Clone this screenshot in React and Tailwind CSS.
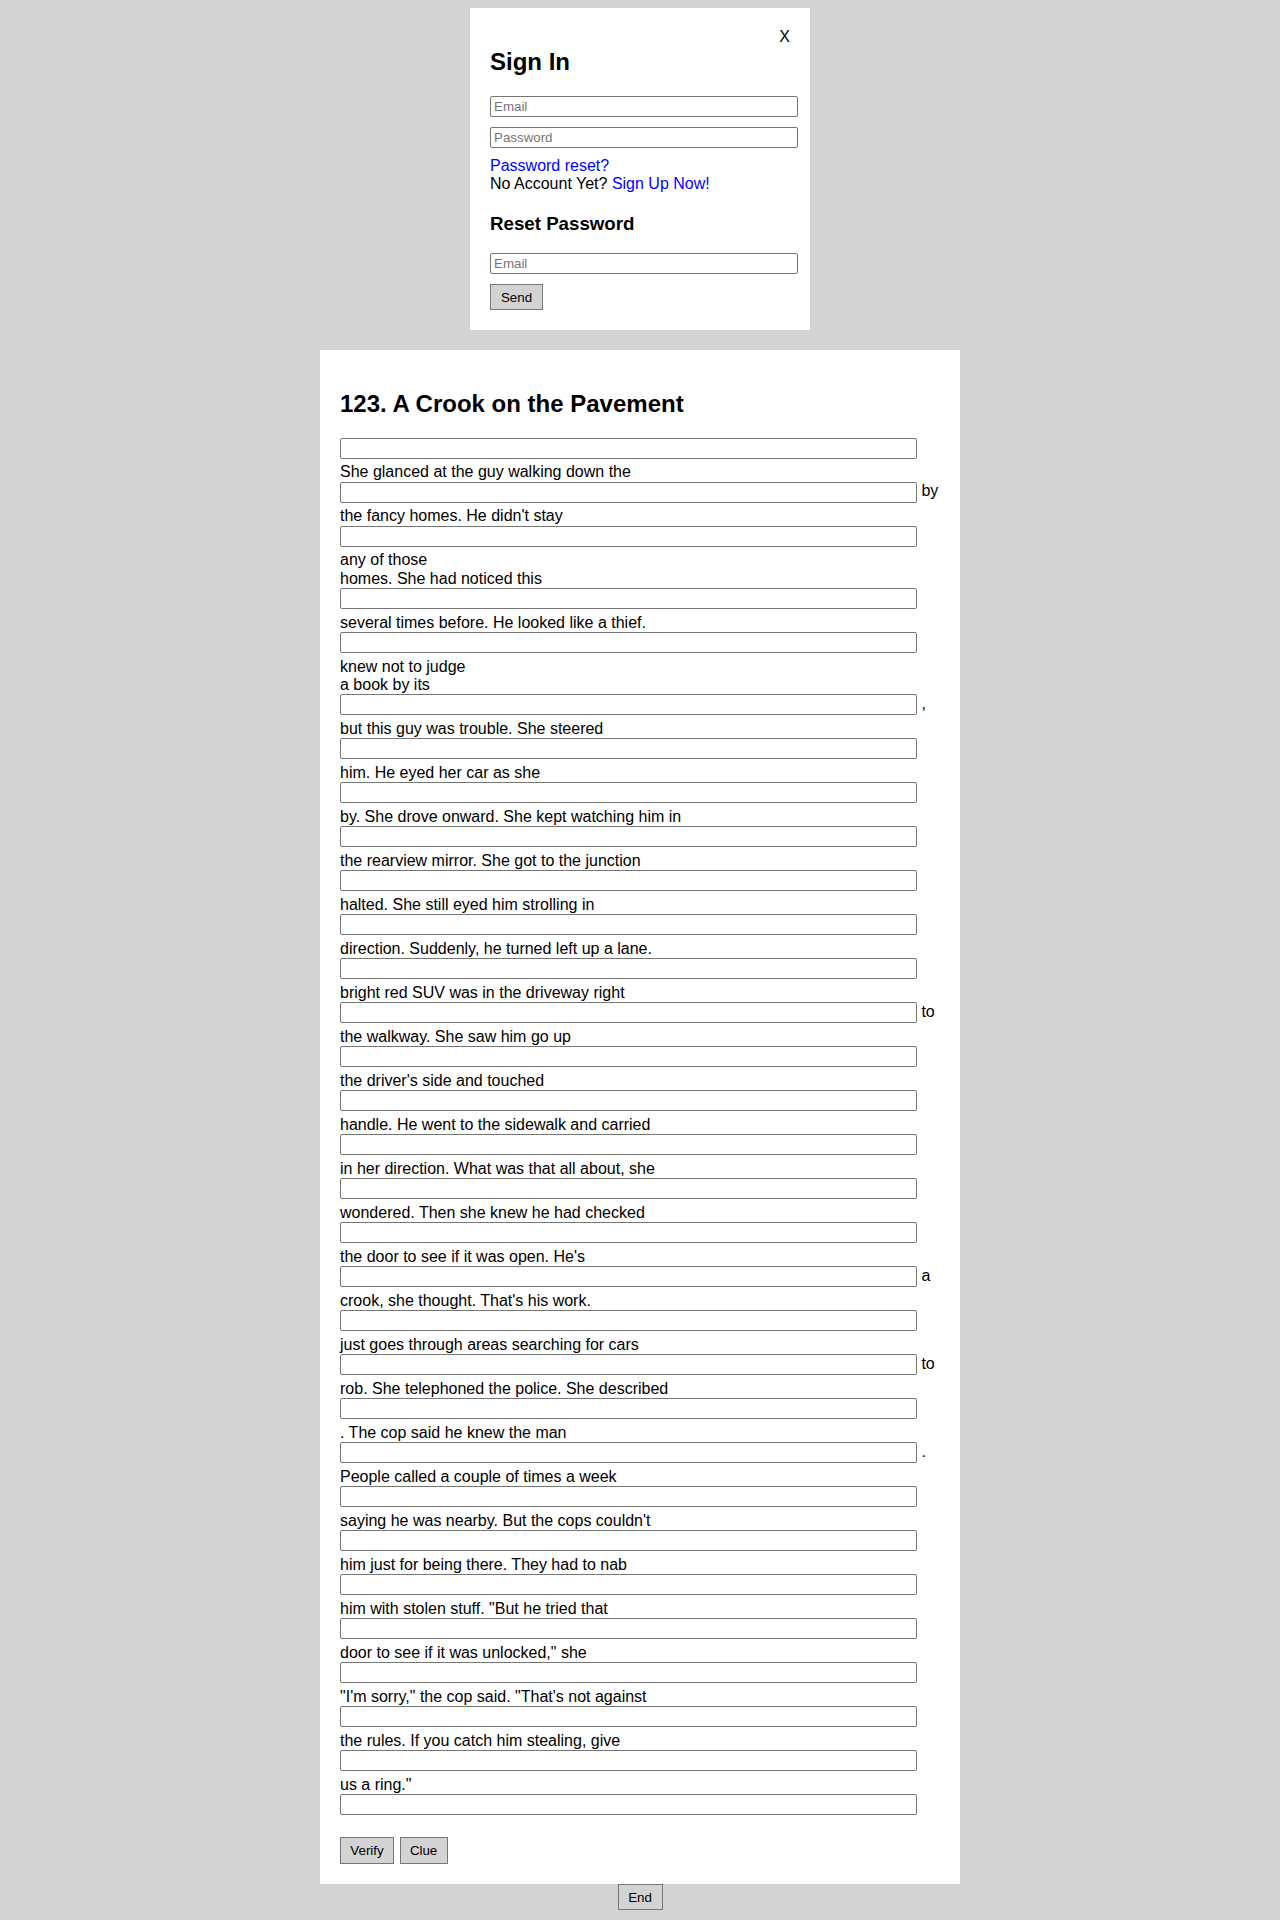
import { useState } from 'react'

// story lines: strings are plain text lines, objects are blanks (with optional trailing text)
const story = [
  { after: '' },
  'She glanced at the guy walking down the',
  { after: 'by' },
  "the fancy homes. He didn't stay",
  { after: '' },
  'any of those',
  'homes. She had noticed this',
  { after: '' },
  'several times before. He looked like a thief.',
  { after: '' },
  'knew not to judge',
  'a book by its',
  { after: ',' },
  'but this guy was trouble. She steered',
  { after: '' },
  'him. He eyed her car as she',
  { after: '' },
  'by. She drove onward. She kept watching him in',
  { after: '' },
  'the rearview mirror. She got to the junction',
  { after: '' },
  'halted. She still eyed him strolling in',
  { after: '' },
  'direction. Suddenly, he turned left up a lane.',
  { after: '' },
  'bright red SUV was in the driveway right',
  { after: 'to' },
  'the walkway. She saw him go up',
  { after: '' },
  "the driver's side and touched",
  { after: '' },
  'handle. He went to the sidewalk and carried',
  { after: '' },
  'in her direction. What was that all about, she',
  { after: '' },
  'wondered. Then she knew he had checked',
  { after: '' },
  "the door to see if it was open. He's",
  { after: 'a' },
  "crook, she thought. That's his work.",
  { after: '' },
  'just goes through areas searching for cars',
  { after: 'to' },
  'rob. She telephoned the police. She described',
  { after: '' },
  '. The cop said he knew the man',
  { after: '.' },
  'People called a couple of times a week',
  { after: '' },
  "saying he was nearby. But the cops couldn't",
  { after: '' },
  'him just for being there. They had to nab',
  { after: '' },
  'him with stolen stuff. "But he tried that',
  { after: '' },
  'door to see if it was unlocked," she',
  { after: '' },
  '"I\'m sorry," the cop said. "That\'s not against',
  { after: '' },
  'the rules. If you catch him stealing, give',
  { after: '' },
  'us a ring."',
  { after: '' }
]

const inputCls =
  'block h-[21px] border border-[#767676] rounded-[2px] bg-white px-[3px] text-[13.33px] leading-[15px] text-black placeholder:text-[#757575] outline-none'

const btnCls =
  'h-[26.5px] border border-[#767676] bg-[#d3d3d3] text-[13.33px] leading-[15px] text-black text-center'

export default function App() {
  const [open, setOpen] = useState(true)
  const [answers, setAnswers] = useState({})

  let blank = 0

  return (
    <div className="min-h-screen bg-[#d3d3d3] pt-[8px] font-['Liberation_Sans',Arial,sans-serif] text-[16px] leading-[18.4px] text-black">
      {open && (
        <div className="mx-auto w-[340px] bg-white p-[20px]">
          <span className="float-right cursor-pointer" onClick={() => setOpen(false)}>
            X
          </span>
          <h2 className="mt-[19.92px] mb-[20.5px] text-[24px] font-bold leading-[27.6px]">Sign In</h2>
          <input type="text" placeholder="Email" className={`${inputCls} w-[308px] mb-[10px]`} />
          <input type="password" placeholder="Password" className={`${inputCls} w-[308px] mb-[9px]`} />
          <a href="#" className="block text-[#0000ff]">Password reset?</a>
          <div>
            No Account Yet? <a href="#" className="text-[#0000ff]">Sign Up Now!</a>
          </div>
          <h3 className="mt-[18.72px] mb-[18.72px] text-[18.72px] font-bold leading-[21.5px]">Reset Password</h3>
          <input type="text" placeholder="Email" className={`${inputCls} w-[308px] mb-[10px]`} />
          <button className={`${btnCls} w-[53px]`}>Send</button>
        </div>
      )}

      <div className="mx-auto mt-[20px] w-[640px] bg-white p-[20px]">
        <h2 className="my-[19.92px] text-[24px] font-bold leading-[27.6px]">123. A Crook on the Pavement</h2>

        <div>
          {story.map((item, idx) => {
            if (typeof item === 'string') {
              return (
                <div key={idx} className="h-[18.4px] whitespace-nowrap">
                  {item}
                </div>
              )
            }
            const n = blank++
            return (
              <div key={idx} className="flex items-start gap-[4.4px] h-[25.6px]">
                <input
                  type="text"
                  value={answers[n] || ''}
                  onChange={(e) => setAnswers({ ...answers, [n]: e.target.value })}
                  className={`${inputCls} w-[577px] shrink-0`}
                />
                {item.after && <span className="mt-[0.7px]">{item.after}</span>}
              </div>
            )
          })}
        </div>

        <div className="mt-[17.9px] flex gap-[5.6px]">
          <button className={`${btnCls} w-[54px]`}>Verify</button>
          <button className={`${btnCls} w-[48px]`}>Clue</button>
        </div>
      </div>

      <div className="flex justify-center">
        <button className={`${btnCls} w-[45px]`}>End</button>
      </div>
    </div>
  )
}
